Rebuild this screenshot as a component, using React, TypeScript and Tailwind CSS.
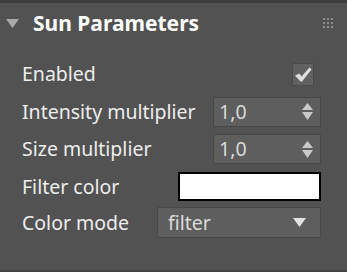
import React from "react";

const font = { fontFamily: '"Noto Sans", "DejaVu Sans", sans-serif' };

const Spinner = () => (
  <svg width="11" height="17" viewBox="0 0 11 17" className="shrink-0">
    <polygon points="5.5,0 11,7 0,7" fill="#c9c9c9" />
    <polygon points="0,9 11,9 5.5,17" fill="#c9c9c9" />
  </svg>
);

const NumberField = ({ value }: { value: string }) => (
  <div className="flex h-[30px] w-[108px] items-center justify-between border border-[#474747] bg-[#5e5e5e] pl-[5px] pr-[7px]">
    <span className="text-[19.5px] leading-none text-[#dadada]">{value}</span>
    <Spinner />
  </div>
);

const Row = ({
  label,
  height,
  children,
}: {
  label: string;
  height: string;
  children: React.ReactNode;
}) => (
  <div className={`flex items-center justify-between ${height}`}>
    <span className="text-[19.5px] leading-none text-[#ededed]">{label}</span>
    {children}
  </div>
);

export default function App() {
  return (
    <div
      className="flex h-[272px] w-[347px] flex-col border-t-[3px] border-b-2 border-[#3e3e3e] border-b-[#444444] bg-[#525252]"
      style={font}
    >
      <div className="flex h-[40px] items-center pl-[6px] pr-[14px]">
        <svg width="13" height="9" viewBox="0 0 13 9" className="mr-[14px] shrink-0">
          <polygon points="0,0 13,0 6.5,9" fill="#a9a9a9" />
        </svg>
        <span className="text-[21px] font-bold leading-none text-white">Sun Parameters</span>
        <div className="ml-auto grid grid-cols-3 gap-[2px]">
          {Array.from({ length: 9 }).map((_, i) => (
            <div key={i} className="h-[2px] w-[2px] bg-[#8c8c8c]" />
          ))}
        </div>
      </div>

      <div className="mt-[12px] flex flex-col pl-[22px] pr-[26px]">
        <Row label="Enabled" height="h-[38px]">
          <div className="mr-[7px] flex h-[23px] w-[22px] items-center justify-center border border-[#4a4a4a] bg-[#616161]">
            <svg width="17" height="15" viewBox="0 0 17 15">
              <path d="M0 8.5 L4.5 6.5 L6.5 9.5 L14.5 0.5 L16.5 2.5 L7 14.5 L5.5 14.5 Z" fill="#dedede" />
            </svg>
          </div>
        </Row>
        <Row label="Intensity multiplier" height="h-[37px]">
          <NumberField value="1,0" />
        </Row>
        <Row label="Size multiplier" height="h-[38px]">
          <NumberField value="1,0" />
        </Row>
        <Row label="Filter color" height="h-[37px]">
          <div className="h-[29px] w-[143px] border-2 border-black bg-white" />
        </Row>
        <Row label="Color mode" height="h-[35px]">
          <div className="flex h-[31px] w-[164px] items-center justify-between border border-[#484848] bg-[#5e5e5e] pl-[10px] pr-[14px]">
            <span className="text-[19.5px] leading-none text-[#dadada]">filter</span>
            <svg width="13" height="9" viewBox="0 0 13 9">
              <polygon points="0,0 13,0 6.5,9" fill="#e2e2e2" />
            </svg>
          </div>
        </Row>
      </div>
    </div>
  );
}
